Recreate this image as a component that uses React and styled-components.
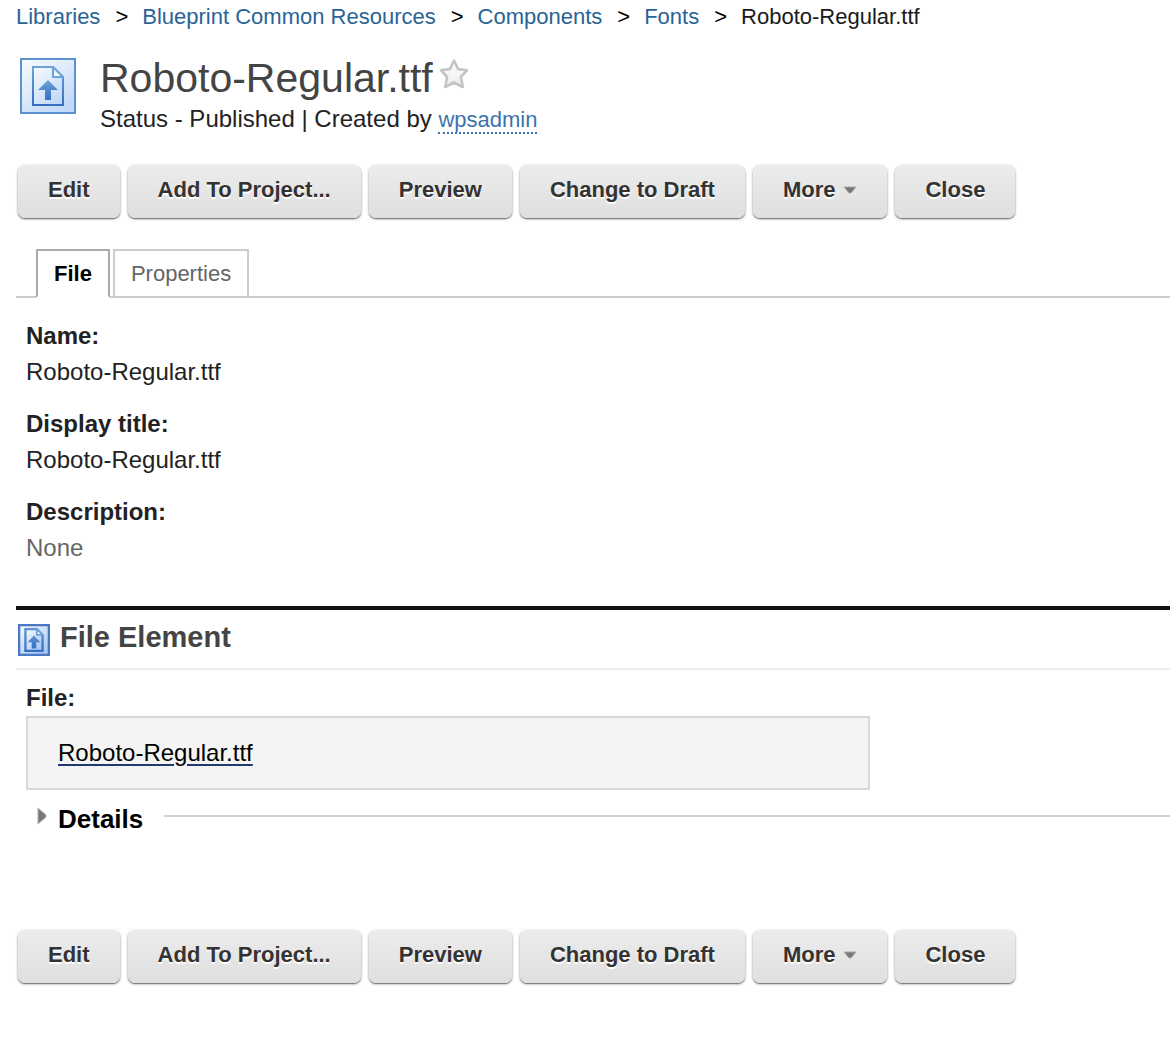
import React, { useId, useState } from "react";
import styled, { createGlobalStyle } from "styled-components";

const GlobalStyle = createGlobalStyle`
  *, *::before, *::after { box-sizing: border-box; }
  body {
    margin: 0;
    background: #fff;
    color: #222;
    font-family: "Liberation Sans", Arial, Helvetica, sans-serif;
    font-size: 24px;
    line-height: 28px;
  }
`;

const Page = styled.main`
  padding: 4px 0 64px 16px;
`;

const Crumbs = styled.ol`
  display: flex;
  flex-wrap: wrap;
  margin: 0;
  padding: 0;
  list-style: none;
  font-size: 22px;
  line-height: 26px;
`;

const Crumb = styled.li`
  color: #1a1a1a;
  & + &::before {
    content: ">";
    margin: 0 14px 0 15px;
    color: #000;
  }
`;

const CrumbLink = styled.a`
  color: #2a6496;
  text-decoration: none;
`;

const Header = styled.header`
  display: flex;
  gap: 24px;
  padding: 28px 0 0 4px;
  svg { flex: none; }
`;

const TitleRow = styled.div`
  display: flex;
  align-items: flex-start;
  gap: 3px;
`;

const Title = styled.h1`
  margin: 0;
  color: #444;
  font-size: 41px;
  font-weight: 400;
  line-height: 40px;
`;

const StarButton = styled.button`
  display: block;
  margin: 0;
  padding: 0;
  border: 0;
  background: none;
  cursor: pointer;
  svg { display: block; }
`;

const Status = styled.p`
  margin: 7px 0 0;
`;

const AuthorLink = styled.a`
  display: inline-block;
  border-bottom: 2px dotted #3b73af;
  color: #3b73af;
  font-size: 22px;
  line-height: 24px;
  text-decoration: none;
`;

const Toolbar = styled.div`
  display: flex;
  flex-wrap: wrap;
  gap: 8px;
  padding-left: 2px;
  margin-top: ${(p) => p.$top}px;
`;

const ToolButton = styled.button`
  display: flex;
  align-items: center;
  gap: 8px;
  height: 53px;
  padding: 0 30px 3px;
  border: 0;
  border-radius: 7px;
  background: linear-gradient(#ececec, #dfdfdf);
  box-shadow: 0 1px 1px #777, 0 1px 3px rgba(0, 0, 0, 0.35);
  color: #333;
  font: bold 22px/26px "Liberation Sans", Arial, sans-serif;
  text-shadow: 0 2px 1px #fff;
  cursor: pointer;
`;

const Tabs = styled.div`
  display: flex;
  gap: 3px;
  margin-top: 31px;
  padding-left: 20px;
  border-bottom: 2px solid #ccc;
`;

const Tab = styled.button`
  height: 49px;
  margin-bottom: -2px;
  padding: 0 16px;
  border: 2px solid ${(p) => (p.$active ? "#aaa" : "#ccc")};
  border-bottom-color: ${(p) => (p.$active ? "#fff" : "#ccc")};
  background: #fff;
  color: ${(p) => (p.$active ? "#000" : "#666")};
  font: ${(p) => (p.$active ? "bold" : "normal")} 22px/26px "Liberation Sans", Arial, sans-serif;
  cursor: pointer;
`;

const Fields = styled.dl`
  display: grid;
  gap: 16px;
  margin: 0;
  padding: 20px 10px 0;
`;

const Field = styled.div`
  line-height: 36px;
`;

const Label = styled.dt`
  font-weight: bold;
`;

const Value = styled.dd`
  margin: 0;
  color: ${(p) => (p.$muted ? "#666" : "#222")};
`;

const Section = styled.section`
  margin-top: 40px;
  border-top: 4px solid #111;
`;

const SectionHead = styled.div`
  display: flex;
  align-items: flex-end;
  gap: 10px;
  height: 60px;
  padding: 0 2px 12px;
  border-bottom: 2px solid #eee;
`;

const SectionTitle = styled.h2`
  margin: 0;
  color: #444;
  font-size: 29px;
  line-height: 38px;
`;

const FileField = styled.div`
  padding: 14px 10px 0;
`;

const FileLabel = styled.div`
  font-weight: bold;
`;

const FileBox = styled.div`
  max-width: 844px;
  margin-top: 4px;
  padding: 22px 30px;
  border: 2px solid #d8d8d8;
  background: #f4f4f4;
  line-height: 26px;
`;

const FileLink = styled.a`
  color: #000;
  text-decoration: underline;
  text-decoration-color: #1f3a6e;
  text-decoration-thickness: 2px;
  text-underline-offset: 3px;
`;

const DetailsRow = styled.div`
  display: flex;
  align-items: center;
  gap: 21px;
  padding: 14px 0 0 21px;
  &::after {
    content: "";
    flex: 1;
    height: 2px;
    margin-bottom: 6px;
    background: #d0d0d0;
  }
`;

const DetailsToggle = styled.button`
  display: flex;
  gap: 11px;
  padding: 0;
  border: 0;
  background: none;
  color: #000;
  font: bold 26px/30px "Liberation Sans", Arial, sans-serif;
  cursor: pointer;
  svg { margin-top: 3px; }
`;

function FileIcon({ size, strong }) {
  const id = useId();
  const edge = strong ? "#4a78c4" : "#5c92cf";
  return (
    <svg width={size} height={size} viewBox="0 0 56 56" aria-hidden="true">
      <defs>
        <linearGradient id={id} x1="0" y1="0" x2="0.7" y2="1">
          <stop offset="0" stopColor="#f7fcfd" />
          <stop offset="1" stopColor={strong ? "#a9c8f4" : "#c2d9f8"} />
        </linearGradient>
        <linearGradient id={id + "s"} x1="0" y1="0" x2="0" y2="1">
          <stop offset="0" stopColor={strong ? "#5d93d4" : "#6ba2da"} />
          <stop offset="1" stopColor="#356fc0" />
        </linearGradient>
      </defs>
      <rect
        x={strong ? 2 : 1}
        y={strong ? 2 : 1}
        width={strong ? 52 : 54}
        height={strong ? 52 : 54}
        fill={`url(#${id})`}
        stroke={edge}
        strokeWidth={strong ? 4 : 2}
      />
      <path
        d="M13 9h20l10 10v28H13z"
        fill={`url(#${id})`}
        stroke={`url(#${id}s)`}
        strokeWidth={strong ? 4 : 2}
      />
      <path
        d="M33 9v10h10z"
        fill="#f3f9ff"
        stroke="#6da3da"
        strokeWidth={strong ? 3 : 2}
        strokeLinejoin="round"
      />
      <path
        d={strong ? "M28 20l11 12h-7v11h-8V32h-7z" : "M28 22l10 10h-7v10h-6V32h-7z"}
        fill={`url(#${id}s)`}
      />
    </svg>
  );
}

function StarIcon() {
  const id = useId();
  return (
    <svg width="32" height="32" viewBox="0 0 32 32" aria-hidden="true">
      <defs>
        <linearGradient id={id} x1="0" y1="0" x2="0" y2="1">
          <stop offset="0" stopColor="#fff" />
          <stop offset="1" stopColor="#ececec" />
        </linearGradient>
      </defs>
      <path
        d="M18 2.500l4 8.500 9 1.400-6.200 6.600 2 10-8.800-4.500-8.800 4.500 1.900-10L5 12.400l9-1.400z"
        fill={`url(#${id})`}
        stroke="#c4c4c4"
        strokeWidth="2.6"
        strokeLinejoin="round"
      />
    </svg>
  );
}

function DownArrow() {
  return (
    <svg width="14" height="8" viewBox="0 0 14 8" aria-hidden="true">
      <path d="M1 1h12L8 7H6z" fill="#777" stroke="#aaa" strokeWidth="1" />
    </svg>
  );
}

function RightArrow() {
  return (
    <svg width="10" height="18" viewBox="0 0 10 18" aria-hidden="true">
      <path d="M1 1l8 7v2L1 17z" fill="#777" stroke="#b0b0b0" strokeWidth="1" />
    </svg>
  );
}

const ACTIONS = ["Edit", "Add To Project...", "Preview", "Change to Draft", "More", "Close"];
const TRAIL = ["Libraries", "Blueprint Common Resources", "Components", "Fonts"];
const FILE = "Roboto-Regular.ttf";

function Actions({ top, label }) {
  return (
    <Toolbar $top={top} role="toolbar" aria-label={label}>
      {ACTIONS.map((name) => (
        <ToolButton key={name} type="button">
          {name}
          {name === "More" && <DownArrow />}
        </ToolButton>
      ))}
    </Toolbar>
  );
}

export default function App() {
  const [open, setOpen] = useState(false);
  const [tab, setTab] = useState("File");
  return (
    <>
      <GlobalStyle />
      <Page>
        <nav aria-label="Breadcrumb">
          <Crumbs>
            {TRAIL.map((name) => (
              <Crumb key={name}>
                <CrumbLink href="#">{name}</CrumbLink>
              </Crumb>
            ))}
            <Crumb aria-current="page">{FILE}</Crumb>
          </Crumbs>
        </nav>
        <Header>
          <FileIcon size={56} />
          <div>
            <TitleRow>
              <Title>{FILE}</Title>
              <StarButton type="button" aria-label="Add to favorites">
                <StarIcon />
              </StarButton>
            </TitleRow>
            <Status>
              Status - Published | Created by <AuthorLink href="#">wpsadmin</AuthorLink>
            </Status>
          </div>
        </Header>
        <Actions top={31} label="Item actions" />
        <Tabs role="tablist">
          {["File", "Properties"].map((name) => (
            <Tab
              key={name}
              type="button"
              role="tab"
              aria-selected={tab === name}
              $active={tab === name}
              onClick={() => setTab(name)}
            >
              {name}
            </Tab>
          ))}
        </Tabs>
        <Fields>
          <Field>
            <Label>Name:</Label>
            <Value>{FILE}</Value>
          </Field>
          <Field>
            <Label>Display title:</Label>
            <Value>{FILE}</Value>
          </Field>
          <Field>
            <Label>Description:</Label>
            <Value $muted>None</Value>
          </Field>
        </Fields>
        <Section>
          <SectionHead>
            <FileIcon size={32} strong />
            <SectionTitle>File Element</SectionTitle>
          </SectionHead>
          <FileField>
            <FileLabel>File:</FileLabel>
            <FileBox>
              <FileLink href="#">{FILE}</FileLink>
            </FileBox>
          </FileField>
          <DetailsRow>
            <DetailsToggle type="button" aria-expanded={open} onClick={() => setOpen(!open)}>
              <RightArrow />
              Details
            </DetailsToggle>
          </DetailsRow>
        </Section>
        <Actions top={96} label="Item actions, bottom" />
      </Page>
    </>
  );
}
